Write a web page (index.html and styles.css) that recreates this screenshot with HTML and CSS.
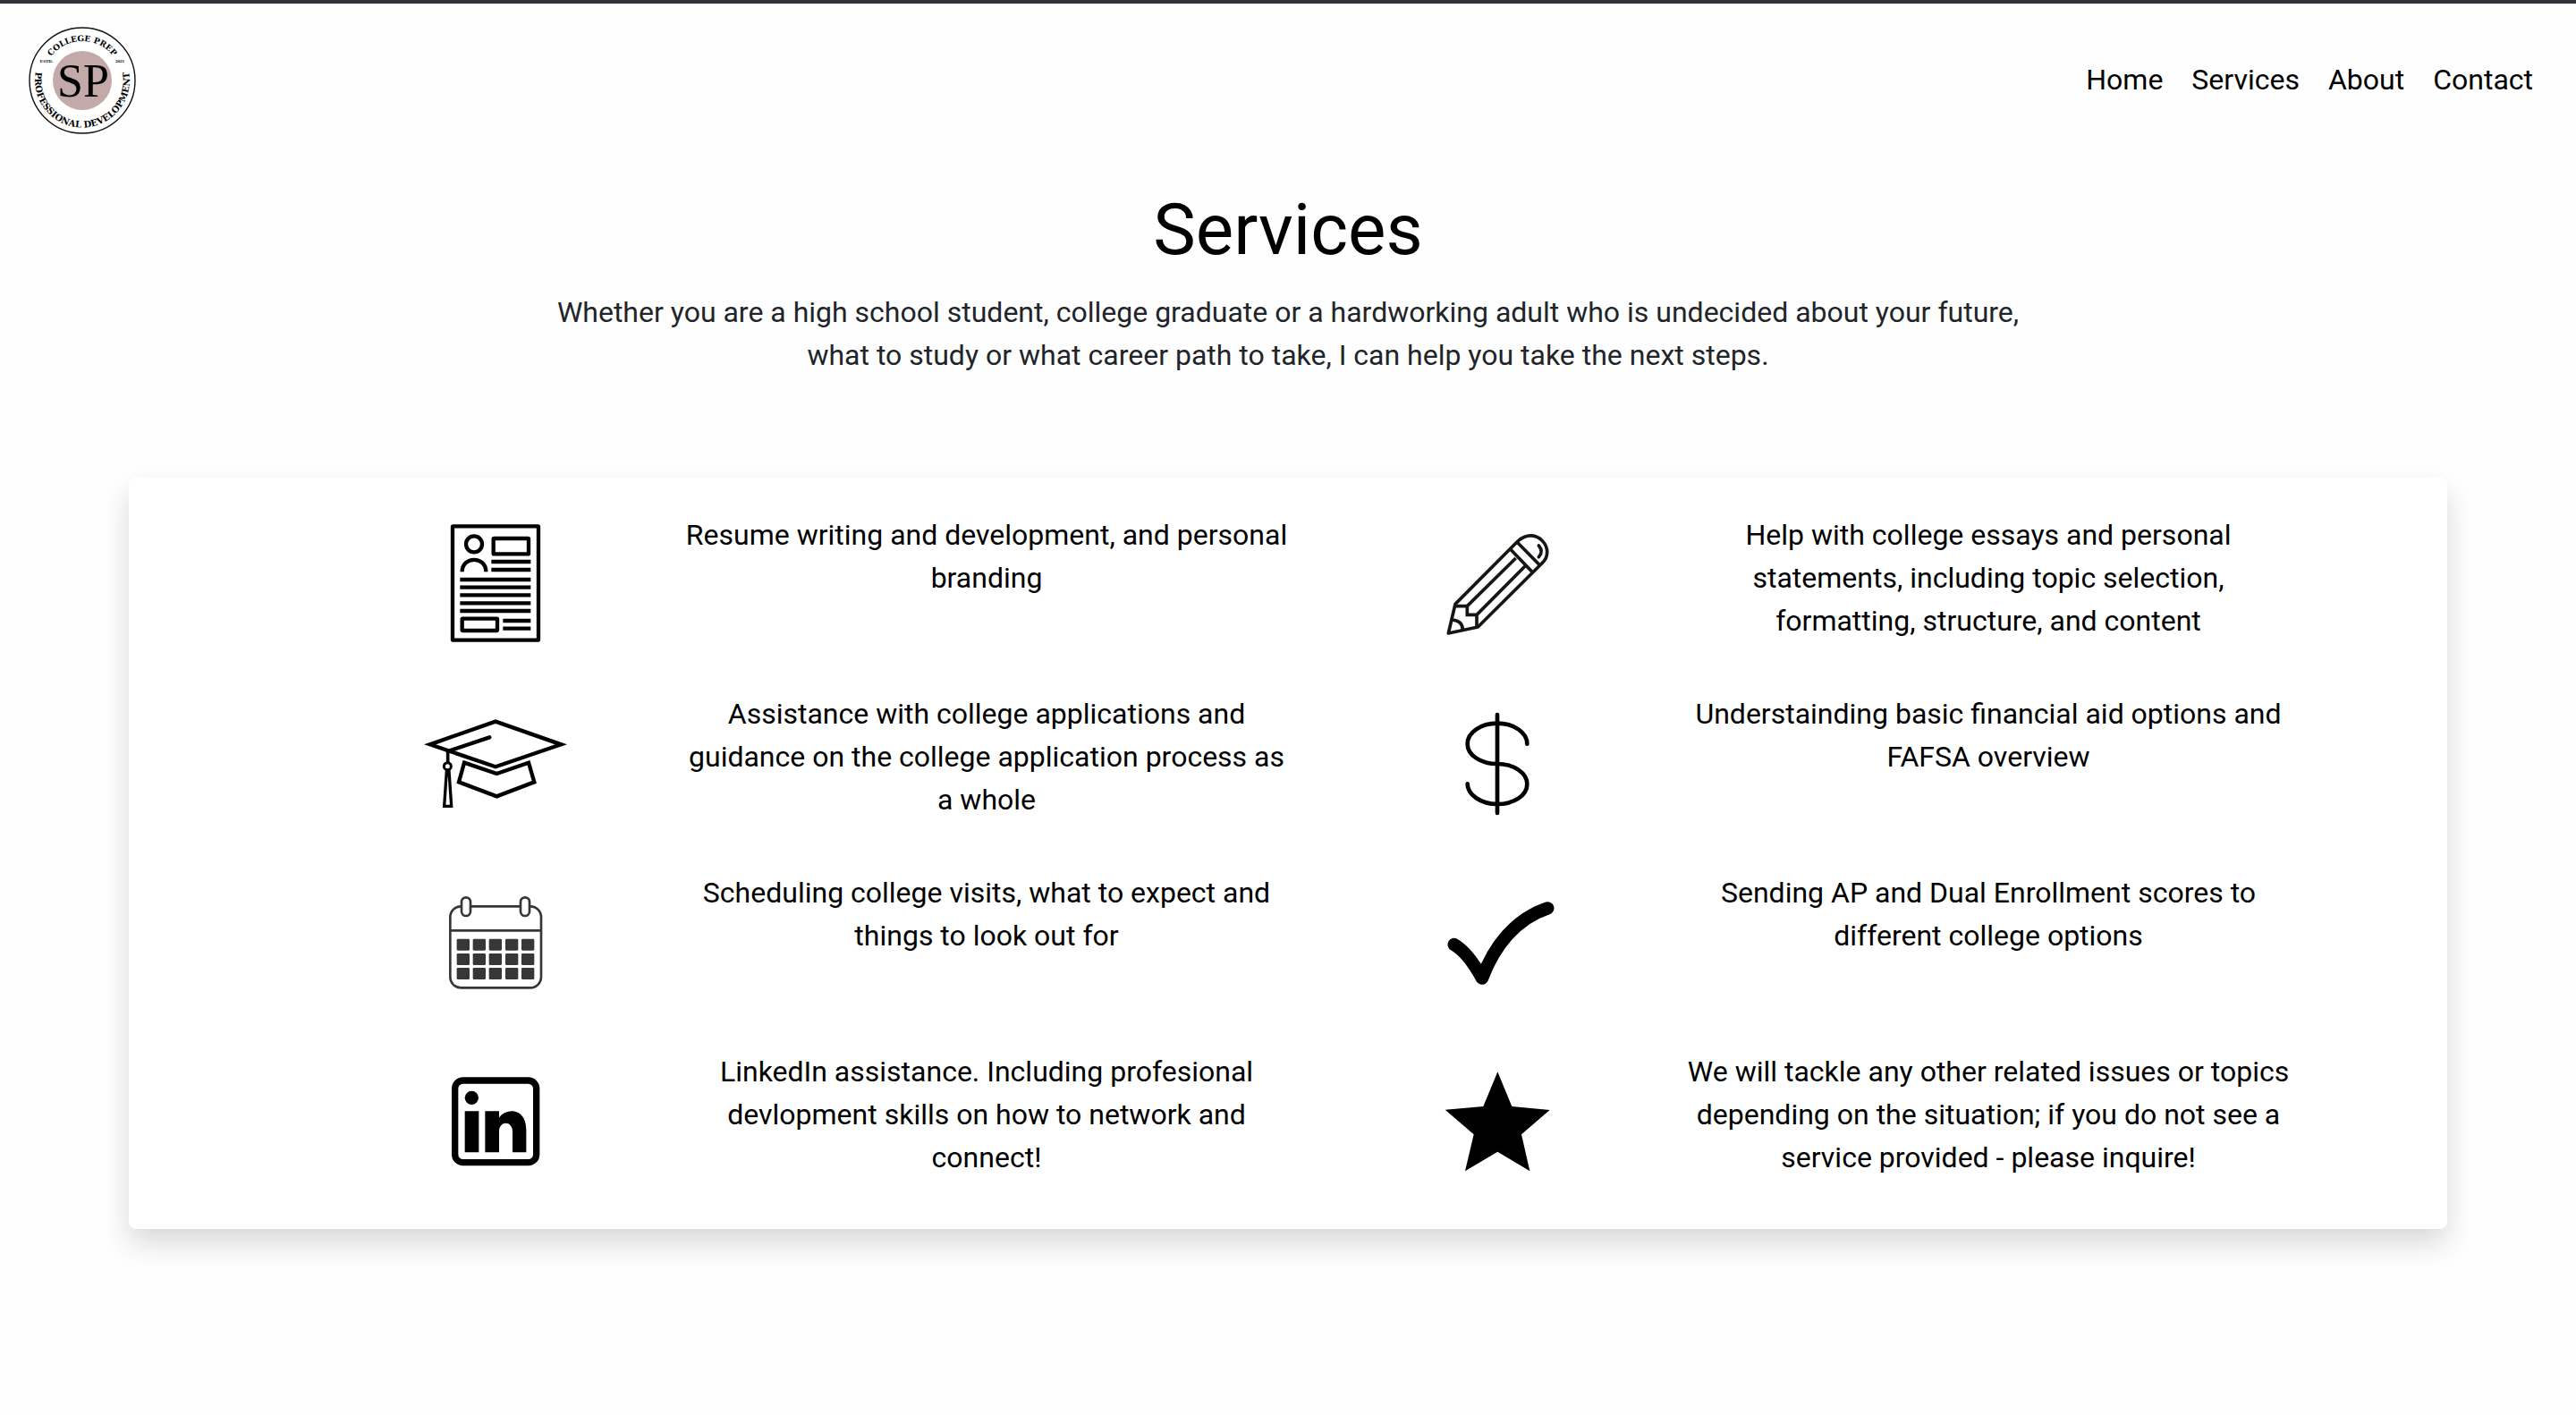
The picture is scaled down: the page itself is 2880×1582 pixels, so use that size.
FILE: index.html
```html
<!DOCTYPE html>
<html lang="en">
<head>
  <meta charset="utf-8">
  <meta name="viewport" content="width=device-width, initial-scale=1">
  <title>Services</title>
  <link rel="stylesheet" href="styles.css">
</head>
<body>
  <header class="site-header">
    <a class="brand" href="#" aria-label="Home page">
      <svg class="brand-logo" viewBox="0 0 120 120" aria-hidden="true">
        <defs>
          <path id="arc-top" d="M16 60a44 44 0 0 1 88 0"/>
          <path id="arc-bottom" d="M10 42a53 53 0 1 0 100 0"/>
        </defs>
        <circle class="logo-ring" cx="60" cy="60" r="59"/>
        <circle class="logo-disc" cx="60" cy="60" r="33"/>
        <text class="logo-arc"><textPath href="#arc-top" startOffset="50%">COLLEGE PREP</textPath></text>
        <text class="logo-arc logo-arc-low"><textPath href="#arc-bottom" startOffset="50%">PROFESSIONAL DEVELOPMENT</textPath></text>
        <text class="logo-small" x="20" y="40">ESTD.</text>
        <text class="logo-small" x="102" y="40">2021</text>
        <text class="logo-initials" x="61" y="78">SP</text>
      </svg>
    </a>
    <nav class="site-nav">
      <a href="#">Home</a>
      <a href="#">Services</a>
      <a href="#">About</a>
      <a href="#">Contact</a>
    </nav>
  </header>

  <main>
    <section class="intro">
      <h1>Services</h1>
      <p>Whether you are a high school student, college graduate or a hardworking adult who is undecided about your future, what to study or what career path to take, I can help you take the next steps.</p>
    </section>

    <section class="services">
      <article class="service">
        <svg class="service-icon line" viewBox="-18 12 600 480" stroke-width="13" aria-hidden="true">
          <rect x="138" y="55" width="288" height="382" rx="2"/>
          <circle cx="210" cy="115" r="27"/>
          <path d="M170 208c0-54 80-54 80 0"/>
          <rect x="275" y="96" width="118" height="52" rx="2"/>
          <path d="M268 174h132M268 201h132M163 234h237M163 260h237M163 286h237M163 313h237M163 339h237M307 372h93M307 398h93"/>
          <rect x="170" y="365" width="118" height="40" rx="2"/>
        </svg>
        <p>Resume writing and development, and personal branding</p>
      </article>
      <article class="service">
        <svg class="service-icon line ink" viewBox="-48 12 600 480" stroke-width="11" aria-hidden="true">
          <path d="M88 414l23-98L321 105c62-56 132 30 80 75L187 393z" stroke-linejoin="round"/>
          <path d="M298 134l72 75M318 108l76 77M314 162L151 323M345 189L183 352M111 323h40v29h32v41M101 369q35 3 35 34"/>
          <path d="M391 120q17 20 0 38" stroke-linecap="round"/>
        </svg>
        <p>Help with college essays and personal statements, including topic selection, formatting, structure, and content</p>
      </article>
      <article class="service">
        <svg class="service-icon line" viewBox="-18 -18 600 480" stroke-width="13" aria-hidden="true">
          <path d="M62 157L282 80L502 157L282 232z"/>
          <path d="M122 180L262 133" stroke-linecap="round"/>
          <path d="M177 218L286 255L393 218L412 283L286 331L159 283z"/>
          <path d="M122 176v40" stroke-width="11"/>
          <circle cx="121" cy="230" r="12" stroke-width="9"/>
          <path d="M118 246L110 364h24L126 246z" stroke-width="10"/>
        </svg>
        <p>Assistance with college applications and guidance on the college application process as a whole</p>
      </article>
      <article class="service">
        <svg class="service-icon line" viewBox="-48 12 600 480" stroke-width="14" stroke-linecap="round" aria-hidden="true">
          <path d="M252 87v330M352 185c0-38-45-69-100-69s-100 31-100 69s45 67 100 67s100 30 100 68s-45 67-100 67s-100-31-100-68"/>
        </svg>
        <p>Understainding basic financial aid options and FAFSA overview</p>
      </article>
      <article class="service">
        <svg class="service-icon line calendar" viewBox="-18 -18 600 480" stroke-width="8" aria-hidden="true">
          <rect x="130" y="100" width="305" height="273" rx="36"/>
          <path d="M130 181h305"/>
          <rect class="clip" x="168" y="70" width="30" height="62" rx="15"/>
          <rect class="clip" x="366" y="70" width="30" height="62" rx="15"/>
          <g class="solid">
            <rect x="152" y="209" width="43" height="39" rx="4"/><rect x="206" y="209" width="43" height="39" rx="4"/><rect x="260" y="209" width="43" height="39" rx="4"/><rect x="315" y="209" width="43" height="39" rx="4"/><rect x="369" y="209" width="43" height="39" rx="4"/>
            <rect x="152" y="258" width="43" height="39" rx="4"/><rect x="206" y="258" width="43" height="39" rx="4"/><rect x="260" y="258" width="43" height="39" rx="4"/><rect x="315" y="258" width="43" height="39" rx="4"/><rect x="369" y="258" width="43" height="39" rx="4"/>
            <rect x="152" y="306" width="43" height="39" rx="4"/><rect x="206" y="306" width="43" height="39" rx="4"/><rect x="260" y="306" width="43" height="39" rx="4"/><rect x="315" y="306" width="43" height="39" rx="4"/><rect x="369" y="306" width="43" height="39" rx="4"/>
          </g>
        </svg>
        <p>Scheduling college visits, what to expect and things to look out for</p>
      </article>
      <article class="service">
        <svg class="service-icon line" viewBox="-48 12 600 480" stroke-width="43" stroke-linecap="round" stroke-linejoin="round" aria-hidden="true">
          <path d="M107 258Q153 284 201 371C241 264 312 172 421 136"/>
        </svg>
        <p>Sending AP and Dual Enrollment scores to different college options</p>
      </article>
      <article class="service">
        <svg class="service-icon" viewBox="-18 -18 600 480" aria-hidden="true">
          <rect class="frame" x="146" y="84" width="273" height="275" rx="27"/>
          <circle cx="202" cy="142" r="23"/>
          <path d="M179 187h47v138h-47zM247 187h47v22c22-34 91-36 91 41v75h-46v-69c0-38-45-38-45 0v69h-47z"/>
        </svg>
        <p>LinkedIn assistance. Including profesional devlopment skills on how to network and connect!</p>
      </article>
      <article class="service">
        <svg class="service-icon" viewBox="-48 -18 600 480" aria-hidden="true">
          <path d="M253 55L301 171L428 183L333 265L361 388L253 323L144 388L173 265L77 182L205 171z"/>
        </svg>
        <p>We will tackle any other related issues or topics depending on the situation; if you do not see a service provided - please inquire!</p>
      </article>
    </section>
  </main>
</body>
</html>
```
FILE: styles.css
```css
* {
  box-sizing: border-box;
}

body {
  margin: 0;
  border-top: 4px solid #323137;
  background: #fefefe;
  color: #212529;
  font-family: Roboto, sans-serif;
  font-size: 32px;
  line-height: 48px;
}

h1,
p {
  margin: 0;
}

.site-header {
  display: flex;
  align-items: center;
  justify-content: space-between;
  padding: 26px 48px 24px 32px;
}

.brand,
.brand-logo {
  display: block;
}

.brand-logo {
  width: 120px;
  height: 120px;
}

.logo-ring {
  fill: #fff;
  stroke: #111;
  stroke-width: 1.4;
}

.logo-disc {
  fill: #c4a9a9;
}

.brand-logo text {
  font-family: "Liberation Serif", serif;
  text-anchor: middle;
  fill: #000;
}

.brand-logo .logo-arc {
  font-family: "DejaVu Serif", serif;
  font-size: 9px;
  font-weight: bold;
}

.brand-logo .logo-arc-low {
  font-size: 10px;
}

.brand-logo .logo-small {
  font-size: 5px;
  font-weight: bold;
}

.brand-logo .logo-initials {
  font-size: 52px;
}

.site-nav {
  display: flex;
  gap: 32px;
  padding-bottom: 2px;
}

.site-nav a {
  color: #000;
  text-decoration: none;
}

.intro {
  width: 58%;
  margin: 35px auto 113px;
  text-align: center;
}

.intro h1 {
  margin-bottom: 20px;
  color: #000;
  font-size: 80px;
  font-weight: 400;
  line-height: 96px;
}

.services {
  display: grid;
  grid-template-columns: 1fr 1fr;
  gap: 40px 130px;
  width: 90%;
  margin: 0 auto 128px;
  padding: 40px 172px 40px 310px;
  border-radius: 8px;
  background: #fff;
  box-shadow: 0 16px 32px rgba(0, 0, 0, 0.15);
  clip-path: inset(-48px -24px -64px);
  color: #000;
  text-align: center;
}

.service {
  display: grid;
  grid-template-columns: 200px 1fr;
  gap: 108px;
  min-height: 160px;
}

.service-icon {
  display: block;
  width: 200px;
  height: 160px;
  fill: #000;
}

.line {
  fill: none;
  stroke: #000;
}

.ink {
  stroke: #161613;
}

.calendar {
  stroke: #383637;
}

.calendar .clip {
  fill: #fff;
}

.calendar .solid {
  fill: #383637;
  stroke: none;
}

.frame {
  fill: none;
  stroke: #000;
  stroke-width: 22;
}
```
